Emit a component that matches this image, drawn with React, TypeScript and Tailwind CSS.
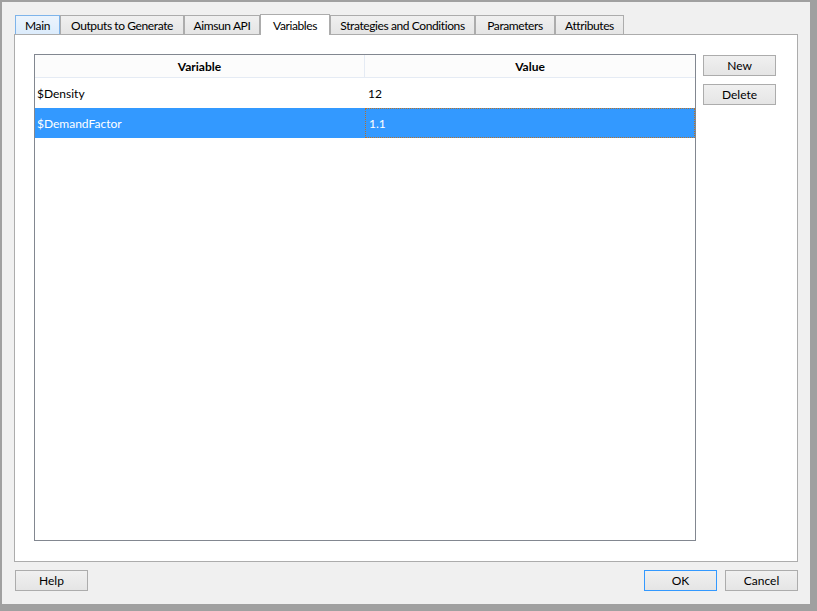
import React from 'react'

const tabs = [
  { label: 'Main', w: 'w-[45px]' },
  { label: 'Outputs to Generate', w: 'w-[124px]' },
  { label: 'Aimsun API', w: 'w-[76px]' },
  { label: 'Variables', w: 'w-[70px]' },
  { label: 'Strategies and Conditions', w: 'w-[145px]' },
  { label: 'Parameters', w: 'w-[80px]' },
  { label: 'Attributes', w: 'w-[69px]' },
]

const rows = [
  { name: '$Density', value: '12' },
  { name: '$DemandFactor', value: '1.1' },
]

function Button({ label, focused = false }: { label: string; focused?: boolean }) {
  return (
    <button
      className={`w-[73px] h-[21px] flex items-center justify-center pt-[1px] border bg-gradient-to-b from-[#f0f0f0] to-[#e5e5e5] text-[12px] text-black leading-none ${
        focused ? 'border-[#3399ff]' : 'border-[#acacac]'
      }`}
    >
      {label}
    </button>
  )
}

export default function App() {
  const selectedTab = 'Variables'
  const selectedRow = 1

  return (
    <div
      className="w-[817px] h-[611px] flex flex-col bg-[#f0f0f0] border-t-2 border-l-2 border-r-[7px] border-b-[7px] border-[#a0a0a0] text-black"
      style={{ fontFamily: 'Lato, "Liberation Sans", sans-serif' }}
    >
      {/* tabs */}
      <div className="flex items-end h-[32px] pt-[12px] pl-[13px] text-[12px] tracking-[-0.4px] whitespace-nowrap">
        {tabs.map((t, i) => {
          const active = t.label === selectedTab
          if (active) {
            return (
              <div
                key={t.label}
                className={`${t.w} h-[21px] mb-[-1px] relative z-10 flex items-center justify-center bg-white border border-b-0 border-[#acacac] pt-[1px]`}
              >
                {t.label}
              </div>
            )
          }
          return (
            <div
              key={t.label}
              className={`${t.w} h-[19px] flex items-center justify-center pt-[2px] border border-b-0 ${
                i === 0
                  ? 'bg-gradient-to-b from-[#ecf4fc] to-[#dcecfc] border-[#7eb4ea]'
                  : 'bg-gradient-to-b from-[#f0f0f0] to-[#e5e5e5] border-[#acacac]'
              }`}
            >
              {t.label}
            </div>
          )
        })}
      </div>

      {/* pane */}
      <div className="mx-[12px] h-[528px] border border-[#acacac] bg-white flex pl-[19px] pr-[21px] pt-[19px] pb-[20px]">
        <div className="w-[662px] border border-[#828790] flex flex-col text-[12px]">
          <div className="flex h-[23px] border-b border-[#e5ebf4] bg-[#fcfcfc] font-bold">
            <div className="w-[330px] border-r border-[#e5ebf4] flex items-center justify-center pt-[1px]">Variable</div>
            <div className="flex-1 flex items-center justify-center pt-[1px]">Value</div>
          </div>
          {rows.map((r, i) => {
            const sel = i === selectedRow
            return (
              <div key={r.name} className={`flex h-[30px] ${sel ? 'bg-[#3399ff] text-white' : ''}`}>
                <div className="w-[330px] flex items-center pl-[2px] pt-[2px]">{r.name}</div>
                <div
                  className={`flex-1 flex items-center pl-[3px] pt-[2px] ${
                    sel ? 'border border-dotted border-[#b5722c] pl-[2px]' : ''
                  }`}
                >
                  {r.value}
                </div>
              </div>
            )
          })}
        </div>
        <div className="ml-[7px] pt-[1px] flex flex-col gap-[8px]">
          <Button label="New" />
          <Button label="Delete" />
        </div>
      </div>

      {/* footer */}
      <div className="flex items-start pt-[8px] pl-[13px] pr-[12px]">
        <Button label="Help" />
        <div className="ml-auto flex gap-[8px]">
          <Button label="OK" focused />
          <Button label="Cancel" />
        </div>
      </div>
    </div>
  )
}
